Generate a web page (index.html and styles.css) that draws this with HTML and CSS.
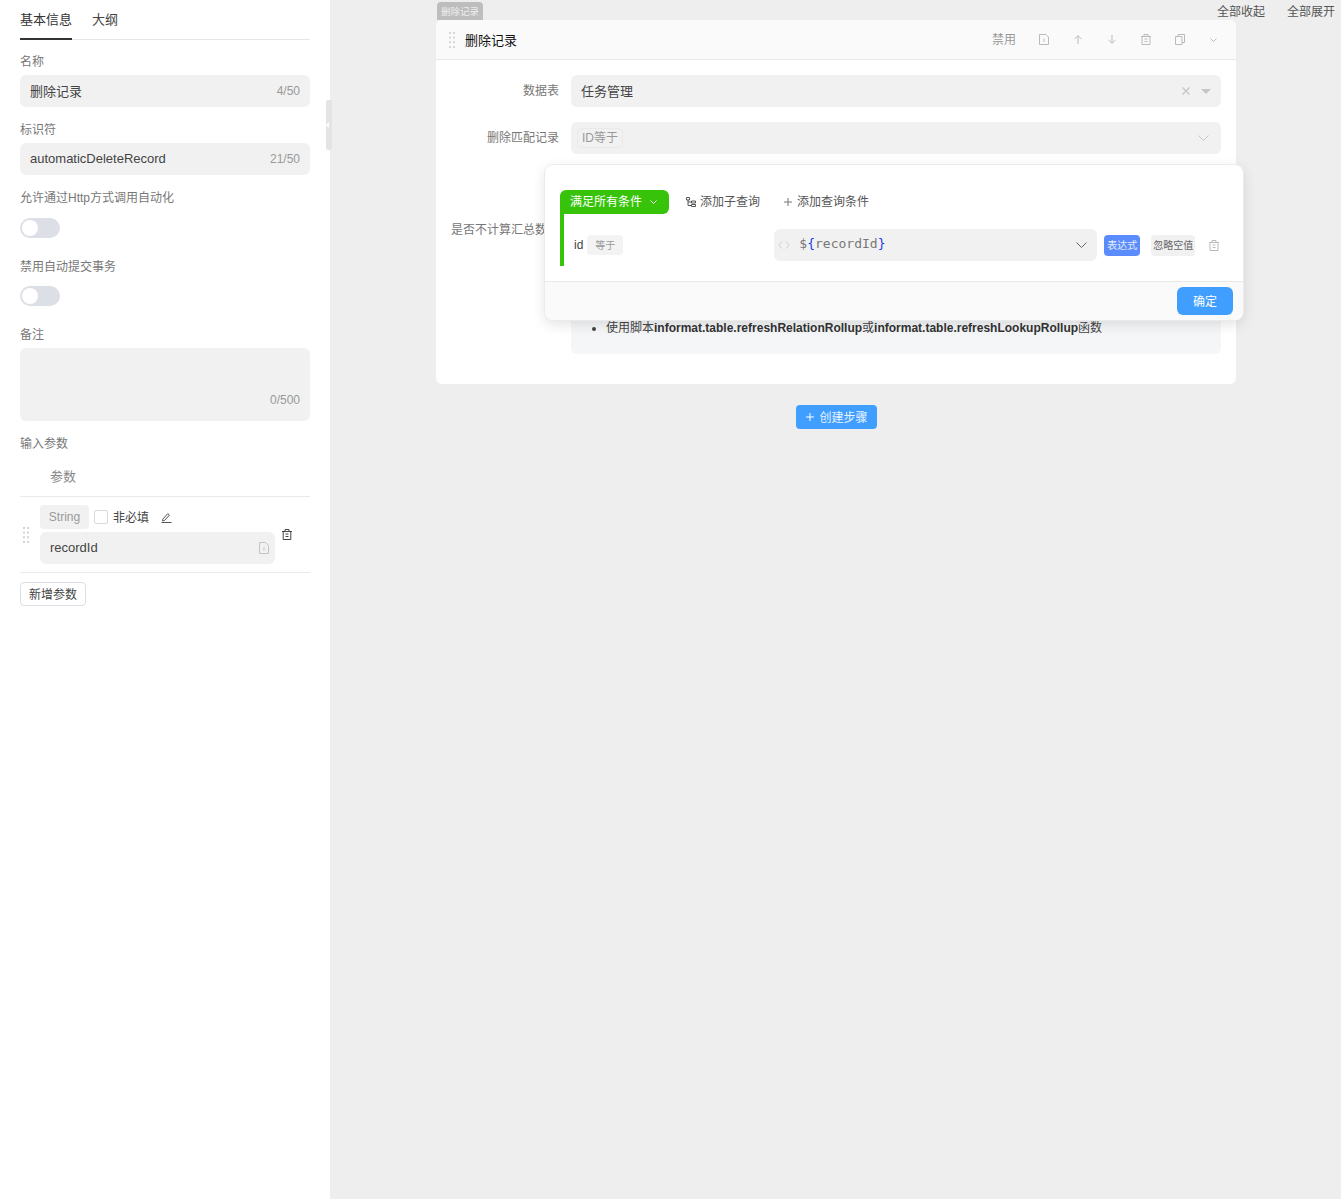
FILE: index.html
```html
<!DOCTYPE html>
<html lang="zh-CN">
<head>
<meta charset="utf-8">
<title>删除记录</title>
<link rel="stylesheet" href="styles.css">
</head>
<body>
<div class="app">
  <aside class="side">
    <div class="tabs"><span class="tab active">基本信息</span><span class="tab">大纲</span></div>
    <div class="field"><div class="label">名称</div><div class="input"><span class="val">删除记录</span><span class="count">4/50</span></div></div>
    <div class="field"><div class="label">标识符</div><div class="input"><span class="val">automaticDeleteRecord</span><span class="count">21/50</span></div></div>
    <div class="field switch-field"><div class="label">允许通过Http方式调用自动化</div><div class="toggle"><i></i></div></div>
    <div class="field switch-field"><div class="label">禁用自动提交事务</div><div class="toggle"><i></i></div></div>
    <div class="field"><div class="label">备注</div><div class="textarea"><span class="count">0/500</span></div></div>
    <div class="label">输入参数</div>
    <div class="param-head">参数</div>
    <div class="param-row">
      <svg class="drag" width="6" height="16" viewBox="0 0 6 16"><g fill="#d4d4d4"><rect width="2" height="2"/><rect x="4" width="2" height="2"/><rect y="4.6" width="2" height="2"/><rect x="4" y="4.6" width="2" height="2"/><rect y="9.2" width="2" height="2"/><rect x="4" y="9.2" width="2" height="2"/><rect y="14" width="2" height="2"/><rect x="4" y="14" width="2" height="2"/></g></svg>
      <div class="param-main">
        <div class="param-top">
          <span class="type">String</span><span class="check"></span><span class="req">非必填</span>
          <svg class="edit" width="11" height="11" viewBox="0 0 11 11" fill="none" stroke="#555" stroke-width="1"><path d="M1.8 7.2 6.8 1.6l1.6 1.5-5 5.5-1.9.3zM.5 10.5h10"/></svg>
        </div>
        <div class="input param-input"><span class="val">recordId</span>
          <svg width="10" height="12" viewBox="0 0 10 12" fill="none" stroke="#c4c4c4"><path d="M.5.5h6l3 3v8h-9zM5 5v3.500"/></svg>
        </div>
      </div>
      <svg class="param-trash" width="10" height="11" viewBox="0 0 10 11" fill="none" stroke="#444"><path d="M0 2.5h10M3 2.5V.5h4v2M1.2 2.5v8h7.6v-8M3.5 5h3M3.5 7.500h3"/></svg>
    </div>
    <button class="add-param"><span>新增参数</span></button>
  </aside>
  <div class="handle"><i></i></div>
  <main class="main">
    <div class="top-actions"><span>全部收起</span><span>全部展开</span></div>
    <div class="column">
      <div class="tag">删除记录</div>
      <section class="card">
        <header class="card-head">
          <svg class="head-drag" width="6" height="16" viewBox="0 0 6 16"><g fill="#d8d8d8"><rect width="2" height="2"/><rect x="4" width="2" height="2"/><rect y="4.600" width="2" height="2"/><rect x="4" y="4.600" width="2" height="2"/><rect y="9.200" width="2" height="2"/><rect x="4" y="9.200" width="2" height="2"/><rect y="14" width="2" height="2"/><rect x="4" y="14" width="2" height="2"/></g></svg>
          <span class="card-title">删除记录</span>
          <span class="disable">禁用</span>
          <span class="hi"><svg width="10" height="11" viewBox="0 0 10 11" fill="none" stroke="#bbb"><path d="M.5.5h6.500l2.500 2.500v7.500h-9zM5 4.500v3.500"/></svg></span>
          <span class="hi"><svg width="8" height="9" viewBox="0 0 8 9" fill="none" stroke="#bbb"><path d="M4 9V.7M.5 4.200 4 .7l3.500 3.500"/></svg></span>
          <span class="hi"><svg width="8" height="9" viewBox="0 0 8 9" fill="none" stroke="#bbb"><path d="M4 0v8.300M.5 4.800 4 8.300l3.500-3.500"/></svg></span>
          <span class="hi"><svg width="10" height="11" viewBox="0 0 10 11" fill="none" stroke="#bbb"><path d="M0 2.500h10M3 2.500V.5h4v2M1 2.500v8h8v-8M3.500 5h3M3.500 7.500h3"/></svg></span>
          <span class="hi"><svg width="10" height="11" viewBox="0 0 10 11" fill="none" stroke="#bbb"><path d="M.5 2.500h6.500v8h-6.500zM3 2.500V.5h6.500v8H7"/></svg></span>
          <span class="hi hi-last"><svg width="7" height="4" viewBox="0 0 7 4" fill="none" stroke="#bbb"><path d="M.5.500 3.500 3.500l3-3"/></svg></span>
        </header>
        <div class="card-body">
          <div class="form-row">
            <div class="form-label">数据表</div>
            <div class="select">
              <span class="select-text">任务管理</span>
              <svg width="8" height="8" viewBox="0 0 8 8" stroke="#c6c6c6" stroke-width="1.400"><path d="M.5.5l7 7M7.500.5l-7 7"/></svg>
              <svg class="caret" width="10" height="5" viewBox="0 0 10 5" fill="#c6c6c6"><path d="M0 0h10L5 5z"/></svg>
            </div>
          </div>
          <div class="form-row">
            <div class="form-label">删除匹配记录</div>
            <div class="select select-tag">
              <span class="mini-tag">ID等于</span>
              <svg width="11" height="6" viewBox="0 0 11 6" fill="none" stroke="#c6c6c6"><path d="M.5.500 5.500 5.500l5-5"/></svg>
            </div>
          </div>
          <div class="form-row form-row-tip">
            <div class="form-label form-label-top">是否不计算汇总数据</div>
            <div class="tip">
              <ul><li>使用脚本<b>informat.table.refreshRelationRollup</b>或<b>informat.table.refreshLookupRollup</b>函数</li></ul>
            </div>
          </div>
        </div>
        <div class="popover">
          <div class="pop-body">
            <div class="pop-actions">
              <span class="group-btn"><span class="btn-text">满足所有条件</span><svg width="7" height="4" viewBox="0 0 7 4" fill="none" stroke="#fff"><path d="M.5.500 3.500 3.500l3-3"/></svg></span>
              <span class="link">
                <svg width="10" height="10" viewBox="0 0 10 10" fill="none" stroke="#555"><path d="M.5.500h3v2.500h-3zM5.500 4h4v2h-4zM5.500 7.500h4v2h-4zM2 3v5.500h3.500M2 5h3.500"/></svg><span class="btn-text">添加子查询</span></span>
              <span class="link link-add"><svg width="8" height="8" viewBox="0 0 8 8" stroke="#777"><path d="M4 0v8M0 4h8"/></svg><span class="btn-text">添加查询条件</span></span>
            </div>
            <div class="rule">
              <span class="rule-id">id</span><span class="op">等于</span>
              <div class="expr">
                <svg width="12" height="8" viewBox="0 0 12 8" fill="none" stroke="#cfcfcf"><path d="M4 .5.700 4 4 7.500M8 .5 11.300 4 8 7.500"/></svg>
                <code>$<em>{</em>recordId<em>}</em></code>
                <svg class="expr-arrow" width="11" height="6" viewBox="0 0 11 6" fill="none" stroke="#666"><path d="M.5.500 5.500 5.500l5-5"/></svg>
              </div>
              <span class="chip chip-on">表达式</span>
              <span class="chip chip-off">忽略空值</span>
              <svg class="rule-trash" width="10" height="11" viewBox="0 0 10 11" fill="none" stroke="#bbb"><path d="M0 2.500h10M3 2.500V.5h4v2M1 2.500v8h8v-8M3.500 5h3M3.500 7.500h3"/></svg>
            </div>
          </div>
          <div class="pop-foot"><button class="ok"><span>确定</span></button></div>
        </div>
      </section>
      <button class="create"><svg width="8" height="8" viewBox="0 0 8 8" stroke="#fff"><path d="M4 0v8M0 4h8"/></svg><span>创建步骤</span></button>
    </div>
  </main>
</div>
</body>
</html>
```
FILE: styles.css
```css
* { box-sizing: border-box; }
html, body { margin: 0; padding: 0; }
body {
  font-family: "Liberation Sans", "Noto Sans CJK SC", sans-serif;
  font-size: 12px;
  color: #333;
  background: #eee;
}
.app { display: flex; height: 1199px; position: relative; overflow: hidden; }

/* sidebar */
.side { width: 331px; flex: none; background: #fff; border-right: 1px solid #eee; padding: 0 20px; }
.tabs { display: flex; gap: 20px; height: 40px; border-bottom: 1px solid #e6e6e6; margin-bottom: 12px; }
.tab { font-size: 13px; line-height: 39px; height: 40px; color: #444; }
.tab.active { color: #333; border-bottom: 2px solid #333; }
.label { height: 18px; line-height: 20px; font-size: 12px; color: #777; }
.field { margin-bottom: 13px; }
.field > .label { margin-bottom: 5px; }
.input {
  height: 32px; background: #f1f1f1; border-radius: 6px; padding: 0 10px;
  display: flex; align-items: center; justify-content: space-between;
  font-size: 13px; color: #444;
}
.val { padding-bottom: 2px; }
.count { font-size: 12px; color: #999; }
.switch-field { margin-bottom: 19px; }
.switch-field > .label { margin-bottom: 11.5px; }
.toggle { width: 40px; height: 20px; border-radius: 10px; background: #dcdfe6; padding: 2px; }
.toggle i { display: block; width: 16px; height: 16px; border-radius: 50%; background: #fff; }
.textarea {
  height: 73px; background: #f1f1f1; border-radius: 6px; padding: 0 10px 14px;
  display: flex; align-items: flex-end; justify-content: flex-end;
}
.param-head { padding: 16px 0 10px 30px; line-height: 18px; font-size: 13px; color: #888; border-bottom: 1px solid #e8eaee; }
.param-row { display: flex; align-items: center; padding: 8px 0; border-bottom: 1px solid #e8eaee; }
.drag { margin: 0 11px 0 3px; flex: none; }
.param-main { width: 235px; }
.param-top { display: flex; align-items: center; height: 24px; margin-bottom: 3px; }
.type { width: 49px; height: 24px; line-height: 24px; text-align: center; background: #f1f1f1; border-radius: 4px; color: #999; }
.check { width: 14px; height: 14px; border: 1px solid #d8dae0; border-radius: 2px; margin: 0 5px; background: #fff; }
.req { color: #444; padding-bottom: 2px; }
.edit { margin-left: 12px; }
.param-input { padding-right: 6px; }
.param-trash { margin-left: 7px; }
.add-param {
  display: block; margin-top: 9px; width: 66px; height: 24px; padding: 0 0 2px;
  background: #fff; border: 1px solid #dcdfe6; border-radius: 4px;
  font: inherit; color: #444;
}
.handle {
  position: absolute; left: 326px; top: 100px; width: 6px; height: 50px;
  background: #e4e4e4; border-radius: 2px; display: flex; align-items: center;
}
.handle i { border: 3.500px solid transparent; border-right-color: #fff; border-left: 0; }

/* main */
.main { flex: 1; position: relative; }
.top-actions { position: absolute; top: 3px; right: 6px; display: flex; gap: 22px; line-height: 18px; color: #555; }
.column { width: 800px; margin: 0 auto; padding-top: 2px; display: flex; flex-direction: column; }
.tag {
  align-self: flex-start; margin-left: 1px; width: 46px; height: 18px; line-height: 20px; text-align: center;
  background: #bdbdbd; color: #eee; font-size: 9.500px; border-radius: 4px 4px 0 0;
}
.card { position: relative; background: #fff; border-radius: 6px; }
.card-head {
  height: 40px; background: #fafafa; border-bottom: 1px solid #eaeaea; border-radius: 6px 6px 0 0;
  display: flex; align-items: center; padding-left: 13px;
}
.card-title { margin-left: 10px; font-size: 13px; color: #111; }
.disable { margin-left: auto; margin-right: 11px; padding-bottom: 2px; color: #999; }
.hi { width: 34px; display: flex; justify-content: center; align-items: center; }
.hi-last { margin-right: 5px; padding-right: 1px; }
.card-body { padding: 15px 15px 30px; }
.form-row { display: flex; align-items: center; margin-bottom: 15px; }
.form-label { width: 108px; margin-right: 12px; padding-bottom: 3px; text-align: right; color: #777; flex: none; }
.select {
  flex: 1; height: 32px; background: #f1f1f1; border-radius: 6px;
  display: flex; align-items: center; padding: 0 10px; font-size: 13px; color: #444;
}
.select-text { margin-right: auto; padding-bottom: 2px; }
.caret { margin-left: 11px; }
.select-tag { padding: 0 12px 0 6px; justify-content: space-between; }
.mini-tag {
  width: 46px; height: 20px; line-height: 18px; text-align: center; border: 1px solid #e9e9e9;
  border-radius: 4px; color: #999; font-size: 12px;
}
.form-row-tip { align-items: flex-start; margin: 61px 0 0; }
.form-label-top { margin-top: 5px; padding-bottom: 0; }
.tip {
  flex: 1; height: 139px; background: #f5f6f8; border-radius: 6px; padding: 104px 10px 0 0;
}
.tip ul { margin: 0; padding-left: 35px; line-height: 18px; color: #444; }
.tip b { color: #333; }

/* popover */
.popover {
  position: absolute; left: 109px; top: 145px; width: 698px; height: 155px;
  background: #fff; border-radius: 8px;
  box-shadow: 0 0 0 1px #ebebeb, 0 4px 14px rgba(0, 0, 0, .12);
  display: flex; flex-direction: column; overflow: hidden;
}
.pop-body { flex: 1; padding: 25px 15px 0; }
.pop-actions { display: flex; align-items: center; height: 24px; }
.btn-text { padding-bottom: 3px; }
.group-btn {
  width: 109px; height: 24px; background: #38c30b; color: #fff; border-radius: 6px 6px 6px 0;
  display: flex; align-items: center; padding-left: 10px; gap: 8px;
}
.link { display: flex; align-items: center; gap: 4px; color: #555; margin-left: 17px; }
.link-add { margin-left: 24px; gap: 5px; }
.rule {
  display: flex; align-items: center; height: 52px; border-left: 4px solid #38c30b; padding: 10px 0 0 10px;
}
.rule-id { color: #444; }
.op {
  margin-left: 4px; width: 36px; height: 20px; line-height: 22px; text-align: center;
  background: #f3f3f3; border-radius: 4px; color: #999; font-size: 10px;
}
.expr {
  margin-left: 151px; width: 323px; height: 32px; background: #f1f1f1; border-radius: 6px;
  display: flex; align-items: center; padding: 0 10px 0 4px;
}
.expr code { margin-left: 9px; font-family: "DejaVu Sans Mono", monospace; font-size: 13px; color: #777; padding-bottom: 4px; }
.expr em { font-style: normal; color: #1c3cf0; }
.expr-arrow { margin-left: auto; }
.chip {
  height: 21px; line-height: 21px; text-align: center; border-radius: 4px; font-size: 10px;
}
.chip-on { margin-left: 7px; width: 36px; background: #5a8dfb; color: #e6eeff; }
.chip-off { margin-left: 11px; width: 44px; background: #f1f1f1; color: #666; }
.rule-trash { margin-left: 14px; }
.pop-foot {
  height: 39px; border-top: 1px solid #e8e8e8; background: #fafafa;
  display: flex; justify-content: flex-end; align-items: center; padding-right: 10px;
}
.ok {
  width: 56px; height: 28px; padding: 0 0 2px; border: 0; border-radius: 6px; background: #409eff; color: #fff; font: inherit;
}
.create {
  align-self: center; margin-top: 21px; width: 81px; height: 24px; padding: 0 0 0 2px; border: 0; border-radius: 4px;
  background: #409eff; color: #e8f3ff; font: inherit;
  display: flex; align-items: center; justify-content: center; gap: 5px;
}
.create span { padding-bottom: 2px; }
```
